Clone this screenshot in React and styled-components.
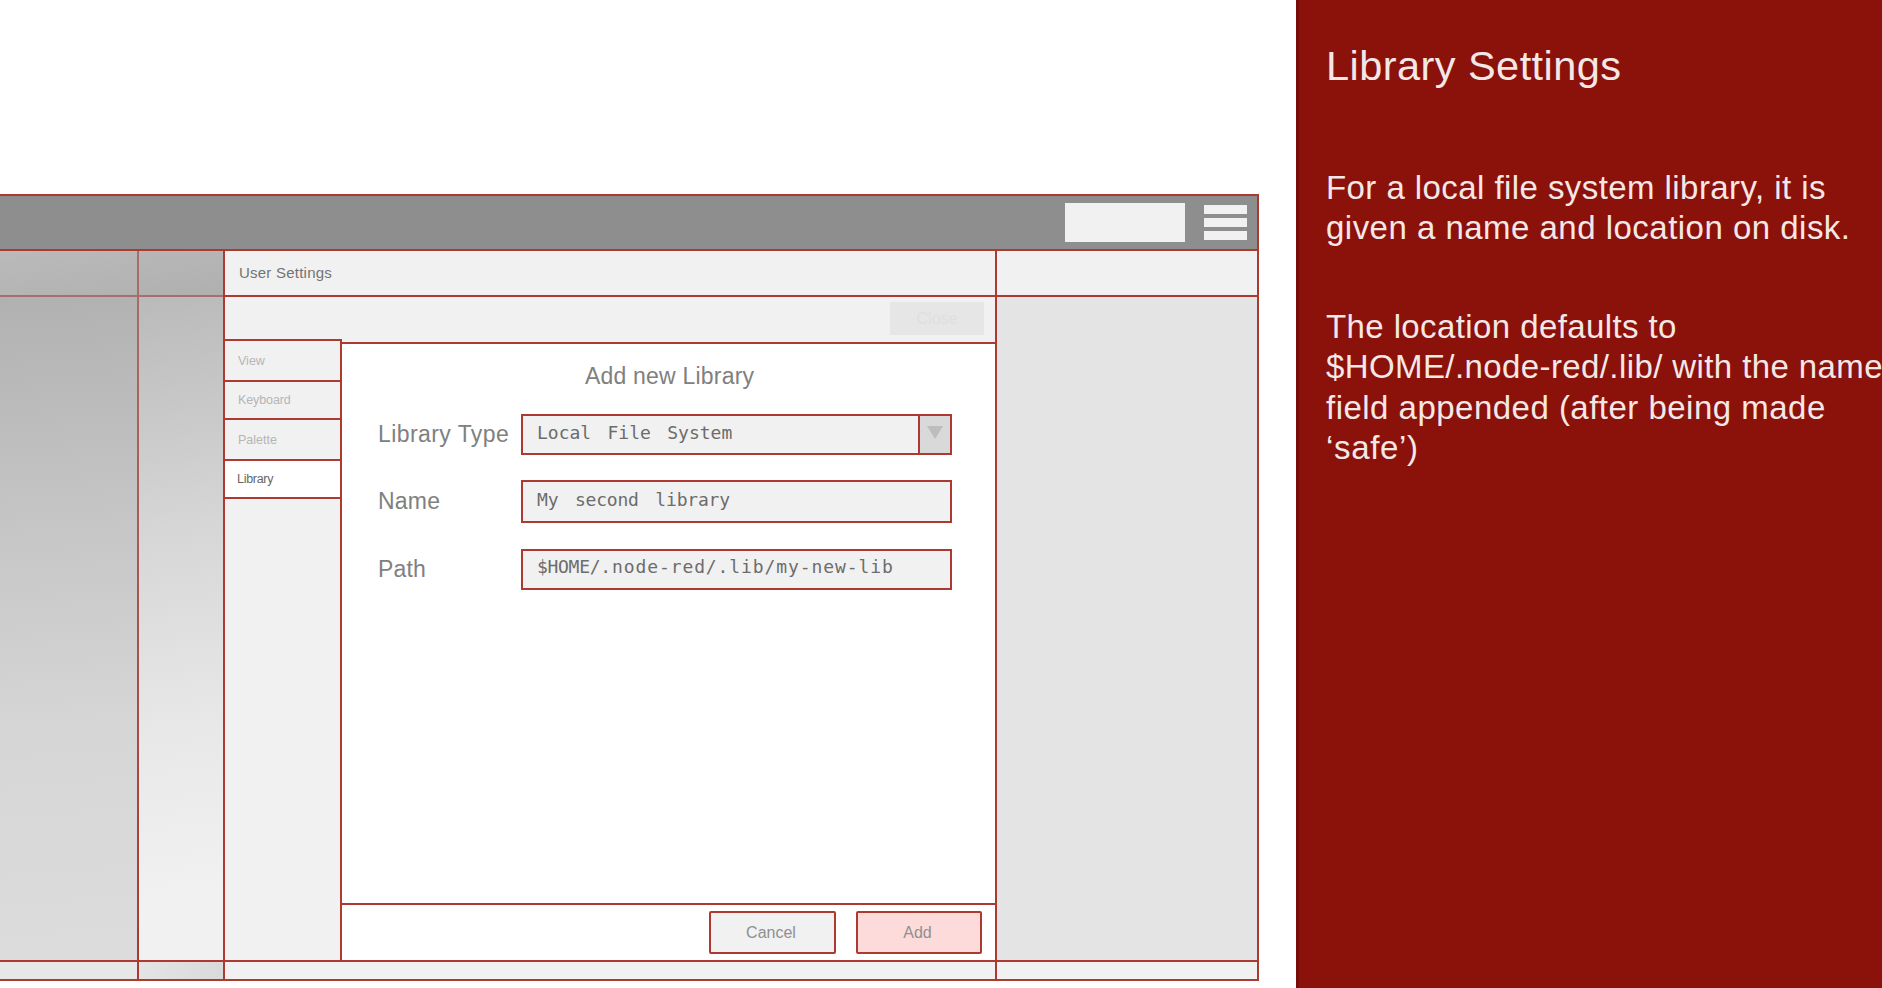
import React from 'react';
import styled, { createGlobalStyle } from 'styled-components';

const LINE = '#ac3a31';
const SHADED_LINE = '#a66f6b';

const GlobalStyle = createGlobalStyle`
  * { box-sizing: border-box; }
  html, body { margin: 0; overflow: hidden; background: #fff; }
  body { font-family: "Liberation Sans", Arial, sans-serif; color: #808080; }
`;

const Page = styled.div`
  display: flex;
  width: 1882px;
  height: 988px;
  overflow: hidden;
`;

const Stage = styled.main`
  width: 1296px;
  flex: none;
  padding-top: 194px;
`;

const EditorWindow = styled.section`
  width: 1259px;
  height: 787px;
  display: grid;
  grid-template-rows: 55px 709px 21px;
  border: solid ${LINE};
  border-width: 2px 2px 0 0;
`;

const Header = styled.header`
  display: flex;
  justify-content: flex-end;
  align-items: flex-start;
  background: #8e8e8e;
  padding: 7px 10px 0 0;
  border-bottom: 2px solid ${LINE};
`;

const DeployBox = styled.div`
  width: 120px;
  height: 39px;
  margin-right: 19px;
  background: #f1f1f1;
`;

const Menu = styled.div`
  display: grid;
  gap: 4px;
  padding-top: 2px;
  width: 43px;
`;

const MenuBar = styled.span`
  height: 9px;
  background: #f1f1f1;
`;

const Body = styled.div`
  display: grid;
  grid-template-columns: 139px 86px 772px 1fr;
`;

const Column = styled.div`
  display: grid;
  grid-template-rows: 46px 1fr;
  border-right: 2px solid ${LINE};
`;

const PaletteColumn = styled(Column)`
  border-image: linear-gradient(${SHADED_LINE}, ${LINE}) 1;
  border-width: 0 2px 0 0;
`;

const ColumnHead = styled.div`
  background: ${(p) => p.$bg};
  border-bottom: 2px solid ${(p) => p.$line || LINE};
`;

const ColumnFill = styled.div`
  background: ${(p) => p.$bg};
`;

const Sidebar = styled.div`
  display: grid;
  grid-template-rows: 46px 1fr;
`;

const Tray = styled.div`
  display: grid;
  grid-template-rows: 46px 45px 1fr;
  border-right: 2px solid ${LINE};
  min-width: 0;
`;

const TrayTitle = styled.div`
  display: flex;
  align-items: center;
  padding: 0 0 2px 14px;
  background: #f1f1f1;
  border-bottom: 2px solid ${LINE};
  font-size: 15px;
  letter-spacing: 0.23px;
  color: #747474;
`;

const TrayBar = styled.div`
  display: flex;
  justify-content: flex-end;
  padding: 5px 11px 0 0;
  background: #f1f1f1;
`;

const CloseButton = styled.div`
  width: 94px;
  height: 33px;
  line-height: 33px;
  text-align: center;
  background: #e6e6e6;
  color: #dfdfdf;
  font-size: 16px;
`;

const TrayBody = styled.div`
  display: grid;
  grid-template-columns: 117px 1fr;
  min-height: 0;
`;

const Tabs = styled.nav`
  display: flex;
  flex-direction: column;
  margin-top: -3px;
  background: #f1f1f1;
  border-right: 2px solid ${LINE};
`;

const Tab = styled.div`
  height: ${(p) => p.$h}px;
  display: flex;
  align-items: center;
  padding-left: ${(p) => (p.$active ? 12 : 13)}px;
  border-top: 2px solid ${LINE};
  background: ${(p) => (p.$active ? '#fff' : '#f1f1f1')};
  color: ${(p) => (p.$active ? '#666' : '#b5b5b5')};
  font-size: 12.5px;
  letter-spacing: ${(p) => p.$ls || 0}px;
`;

const TabsEnd = styled.div`
  border-top: 2px solid ${LINE};
`;

const Form = styled.div`
  display: grid;
  grid-template-rows: 1fr 57px;
  background: #fff;
  border-top: 2px solid ${LINE};
`;

const Fields = styled.div`
  padding: 19px 0 0 36px;
`;

const FormTitle = styled.h2`
  margin: 0 0 24px 207px;
  height: 27px;
  line-height: 27px;
  font-size: 23px;
  font-weight: 400;
  letter-spacing: 0.2px;
`;

const Field = styled.div`
  display: grid;
  grid-template-columns: 143px 431px;
  height: ${(p) => p.$h}px;
  margin-bottom: 26px;
`;

const Label = styled.label`
  line-height: ${(p) => p.$lh || 41}px;
  font-size: 23px;
  white-space: nowrap;
  letter-spacing: ${(p) => p.$ls || 0}px;
`;

const Input = styled.div`
  display: flex;
  justify-content: space-between;
  border: 2px solid ${LINE};
  background: #f1f1f1;
  padding-left: 14px;
  color: #6c6c6c;
  font: 18px/${(p) => p.$lh}px "DejaVu Sans Mono", monospace;
  white-space: pre;
`;

const Run = styled.span`
  letter-spacing: ${(p) => p.$ls}px;
  word-spacing: ${(p) => p.$ws || 0}px;
`;

const Arrow = styled.div`
  width: 32px;
  padding: 10px 0 0 7px;
  line-height: 0;
  background: #d9d9d9;
  border-left: 2px solid ${LINE};
`;

const Actions = styled.div`
  display: flex;
  justify-content: flex-end;
  gap: 20px;
  padding: 6px 13px 0 0;
  border-top: 2px solid ${LINE};
`;

const Button = styled.div`
  width: ${(p) => p.$w}px;
  height: 43px;
  padding-right: 3px;
  border: 2px solid ${LINE};
  border-radius: 2px;
  background: ${(p) => (p.$primary ? '#fddbda' : '#f1f1f1')};
  color: #8f8f8f;
  font-size: 16px;
  line-height: 40px;
  text-align: center;
`;

const StatusBar = styled.footer`
  display: grid;
  grid-template-columns: 139px 86px 772px 1fr;
  border: solid ${LINE};
  border-width: 2px 0;
`;

const StatusCell = styled.div`
  background: ${(p) => p.$bg};
  border-right: ${(p) => (p.$last ? 0 : 2)}px solid ${LINE};
`;

const Notes = styled.aside`
  flex: 1;
  min-width: 0;
  padding: 43px 0 0 27px;
  background: #8b110b;
  border-left: 3px solid #760b07;
  color: #f4e8e7;
  white-space: nowrap;
`;

const NotesTitle = styled.h1`
  margin: 0 0 79px;
  font-size: 41.5px;
  line-height: 46px;
  font-weight: 400;
  letter-spacing: 0.45px;
`;

const Paragraph = styled.p`
  margin: 0 0 58px;
  font-size: 33px;
  line-height: 40.4px;
`;

const TextLine = styled.span`
  display: block;
  letter-spacing: ${(p) => p.$ls || 0}px;
`;

export default function App() {
  return (
    <Page>
      <GlobalStyle />
      <Stage>
        <EditorWindow>
          <Header>
            <DeployBox />
            <Menu><MenuBar /><MenuBar /><MenuBar /></Menu>
          </Header>
          <Body>
            <PaletteColumn>
              <ColumnHead $line={SHADED_LINE} $bg="linear-gradient(170deg,#bababa,#b2b2b2)" />
              <ColumnFill $bg="linear-gradient(175deg,#b1b1b1,#c6c6c6 35%,#d6d6d6 65%,#dcdcdc)" />
            </PaletteColumn>
            <Column>
              <ColumnHead $line={SHADED_LINE} $bg="linear-gradient(170deg,#b7b7b7,#b0b0b0)" />
              <ColumnFill $bg="linear-gradient(170deg,#bababa,#d6d6d6 35%,#e8e8e8 65%,#f1f1f1 90%)" />
            </Column>
            <Tray>
              <TrayTitle>User Settings</TrayTitle>
              <TrayBar><CloseButton>Close</CloseButton></TrayBar>
              <TrayBody>
                <Tabs>
                  <Tab $h={41}>View</Tab>
                  <Tab $h={38} $ls={-0.1}>Keyboard</Tab>
                  <Tab $h={41}>Palette</Tab>
                  <Tab $h={38} $ls={-0.3} $active>Library</Tab>
                  <TabsEnd />
                </Tabs>
                <Form>
                  <Fields>
                    <FormTitle>Add new Library</FormTitle>
                    <Field $h={40}>
                      <Label $ls={0.42}>Library Type</Label>
                      <Input $lh={34}>
                        <Run $ls={0} $ws={5.5}>Local File System</Run>
                        <Arrow>
                          <svg width="16" height="13"><path d="M0 0H16L8 13Z" fill="#bdbdbd" /></svg>
                        </Arrow>
                      </Input>
                    </Field>
                    <Field $h={43}>
                      <Label $ls={0.2} $lh={43}>Name</Label>
                      <Input $lh={35}><Run $ls={-0.2} $ws={6}>My second library</Run></Input>
                    </Field>
                    <Field $h={40}>
                      <Label $ls={0.2}>Path</Label>
                      <Input $lh={31}><span><Run $ls={-0.3}>$HOME/</Run><Run $ls={0.9}>.node-red/.lib/my-new-lib</Run></span></Input>
                    </Field>
                  </Fields>
                  <Actions>
                    <Button $w={127}>Cancel</Button>
                    <Button $w={126} $primary>Add</Button>
                  </Actions>
                </Form>
              </TrayBody>
            </Tray>
            <Sidebar>
              <ColumnHead $bg="#f1f1f1" />
              <ColumnFill $bg="#e4e4e4" />
            </Sidebar>
          </Body>
          <StatusBar>
            <StatusCell $bg="#e7e7e7" />
            <StatusCell $bg="linear-gradient(90deg,#e4e4e4,#dadada)" />
            <StatusCell $bg="#f1f1f1" />
            <StatusCell $bg="#f1f1f1" $last />
          </StatusBar>
        </EditorWindow>
      </Stage>
      <Notes>
        <NotesTitle>Library Settings</NotesTitle>
        <Paragraph>
          <TextLine $ls={0.43}>For a local file system library, it is</TextLine>
          <TextLine $ls={0.48}>given a name and location on disk.</TextLine>
        </Paragraph>
        <Paragraph>
          <TextLine $ls={0.4}>The location defaults to</TextLine>
          <TextLine $ls={0.4}>$HOME/.node-red/.lib/ with the name</TextLine>
          <TextLine $ls={0.48}>field appended (after being made</TextLine>
          <TextLine $ls={0.65}>‘safe’)</TextLine>
        </Paragraph>
      </Notes>
    </Page>
  );
}
